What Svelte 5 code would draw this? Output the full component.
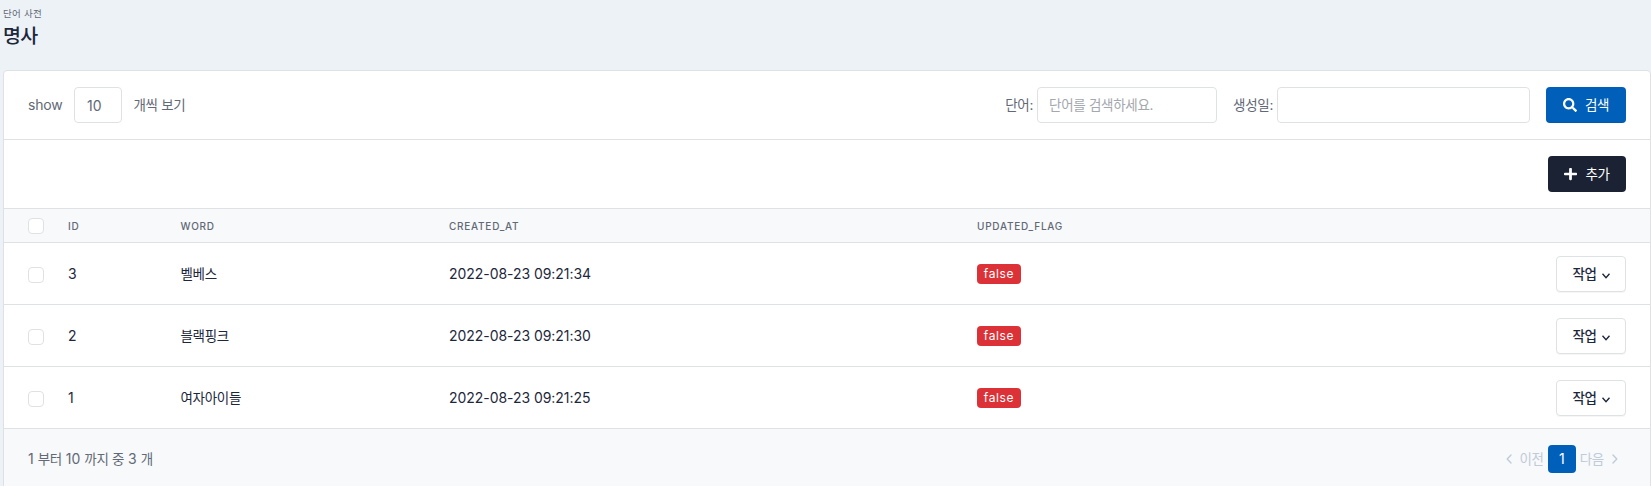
<script>
  const rows = [
    { id: 3, word: '벨베스', created: '2022-08-23 09:21:34', flag: 'false' },
    { id: 2, word: '블랙핑크', created: '2022-08-23 09:21:30', flag: 'false' },
    { id: 1, word: '여자아이들', created: '2022-08-23 09:21:25', flag: 'false' }
  ];
</script>

<div class="page">
  <header>
    <div class="pretitle">단어 사전</div>
    <h2>명사</h2>
  </header>

  <section class="card">
    <div class="bar">
      <div class="length">
        <span class="show">show</span>
        <input class="count" type="text" value="10" aria-label="count" />
        <span class="ko">개씩 보기</span>
      </div>
      <div class="search">
        <label class="word"><span class="ko">단어:</span><input class="ko" type="text" placeholder="단어를 검색하세요." /></label>
        <label class="date"><span class="ko">생성일:</span><input type="text" /></label>
        <button class="btn primary">
          <svg width="14" height="14" viewBox="0 0 512 512" fill="currentColor"><path d="M505 442.700L405.300 343c-4.500-4.500-10.600-7-17-7H372c27.600-35.300 44-79.700 44-128C416 93.100 322.900 0 208 0S0 93.100 0 208s93.100 208 208 208c48.300 0 92.700-16.400 128-44v16.300c0 6.400 2.500 12.500 7 17l99.700 99.700c9.400 9.400 24.600 9.400 33.900 0l28.300-28.300c9.400-9.400 9.400-24.600.1-34zM208 336c-70.700 0-128-57.200-128-128 0-70.700 57.200-128 128-128 70.700 0 128 57.200 128 128 0 70.700-57.200 128-128 128z" /></svg>
          <span class="ko">검색</span>
        </button>
      </div>
    </div>

    <div class="bar actions">
      <button class="btn dark">
        <svg width="13" height="14" viewBox="0 0 448 512" preserveAspectRatio="none" fill="currentColor"><path d="M416 208H272V64c0-17.700-14.300-32-32-32h-32c-17.700 0-32 14.300-32 32v144H32c-17.700 0-32 14.300-32 32v32c0 17.700 14.300 32 32 32h144v144c0 17.700 14.300 32 32 32h32c17.700 0 32-14.300 32-32V304h144c17.700 0 32-14.300 32-32v-32c0-17.700-14.300-32-32-32z" /></svg>
        <span class="ko">추가</span>
      </button>
    </div>

    <div class="row head">
      <input type="checkbox" aria-label="all" />
      <span>ID</span>
      <span>WORD</span>
      <span>CREATED_AT</span>
      <span>UPDATED_FLAG</span>
    </div>
    {#each rows as row (row.id)}
      <div class="row">
        <input type="checkbox" aria-label={row.word} />
        <span>{row.id}</span>
        <span class="ko">{row.word}</span>
        <span class="time">{row.created}</span>
        <span><span class="badge">{row.flag}</span></span>
        <button class="btn menu">
          <span class="ko">작업</span>
          <svg width="8" height="6" viewBox="0 0 8 6" fill="none" stroke="currentColor" stroke-width="1.400"><path d="M.5 .8 4 4.600 7.500 .8" /></svg>
        </button>
      </div>
    {/each}

    <footer>
      <p>1 <span class="ko">부터</span> 10 <span class="ko">까지 중</span> 3 <span class="ko">개</span></p>
      <nav>
        <span class="step">
          <svg width="6" height="10" viewBox="0 0 6 10" fill="none" stroke="currentColor" stroke-width="1.400" stroke-linecap="round" stroke-linejoin="round"><path d="M5 1 1.200 5 5 9" /></svg>
          <span class="ko">이전</span>
        </span>
        <span class="current">1</span>
        <span class="step">
          <span class="ko">다음</span>
          <svg width="6" height="10" viewBox="0 0 6 10" fill="none" stroke="currentColor" stroke-width="1.400" stroke-linecap="round" stroke-linejoin="round"><path d="M1 1 4.800 5 1 9" /></svg>
        </span>
      </nav>
    </footer>
  </section>
</div>

<style>
  :global(body) {
    background: #edf2f6;
  }
  .page {
    box-sizing: border-box;
    height: 486px;
    overflow: hidden;
    padding-left: 3px;
    font: 400 14px/20px Inter, 'Noto Sans CJK KR', sans-serif;
    color: #1d273b;
  }
  .page * {
    box-sizing: border-box;
  }
  header {
    height: 70px;
    padding-top: 6px;
  }
  .pretitle {
    font-size: 9.500px;
    line-height: 16px;
    letter-spacing: 0.25px;
    color: #626976;
  }
  h2 {
    margin: 0;
    font-size: 19.500px;
    font-weight: 500;
    line-height: 28px;
    letter-spacing: -0.8px;
  }
  .card {
    height: 440px;
    border: 1px solid #dfe2e4;
    border-radius: 4px;
    background: #fff;
    overflow: hidden;
  }
  .ko {
    font-size: 13.500px;
    letter-spacing: -0.3px;
  }
  .bar {
    display: flex;
    align-items: center;
    justify-content: space-between;
    height: 69px;
    padding: 0 24px;
    border-bottom: 1px solid #dfe2e4;
    color: #626976;
  }
  .actions {
    justify-content: flex-end;
  }
  .length,
  .search {
    display: flex;
    align-items: center;
  }
  .length {
    gap: 11.500px;
  }
  .show {
    width: 34.500px;
    letter-spacing: -0.15px;
  }
  .search {
    gap: 16px;
  }
  label {
    display: flex;
    align-items: center;
    gap: 4px;
  }
  input[type='text'] {
    height: 36px;
    padding: 0 12px;
    border: 1px solid #dfe2e4;
    border-radius: 4px;
    background: #fff;
    font-family: inherit;
    color: #626976;
  }
  .count {
    width: 48px;
    font-size: 14px;
  }
  .word input {
    width: 180px;
    padding-left: 11px;
  }
  .date input {
    width: 253px;
  }
  ::placeholder {
    color: #a3a7ae;
  }
  .btn {
    display: flex;
    align-items: center;
    justify-content: center;
    height: 36px;
    padding: 0;
    border: 0;
    border-radius: 4px;
    font: 500 14px/20px Inter, 'Noto Sans CJK KR', sans-serif;
    color: #fff;
  }
  .primary {
    width: 80px;
    gap: 8px;
    background: #0060b9;
    box-shadow: inset 0 -1px 0 rgba(24, 36, 51, 0.1);
  }
  .primary .ko,
  .dark .ko {
    font-weight: 400;
  }
  .dark {
    width: 78px;
    gap: 8px;
    background: #1a2234;
  }
  .menu {
    width: 70px;
    gap: 5px;
    border: 1px solid #dfe2e4;
    background: #fff;
    color: #1d273b;
    box-shadow: 0 1px 0 rgba(24, 36, 51, 0.04);
  }
  .menu svg {
    margin-top: 5px;
  }
  .row {
    display: grid;
    grid-template-columns: 40px 112.500px 268.500px 528px 1fr 70px;
    align-items: center;
    height: 62px;
    padding: 0 24px;
    border-bottom: 1px solid #dfe2e4;
  }
  .time {
    letter-spacing: -0.05px;
  }
  .head {
    height: 34px;
    background: #f8f9fb;
    font-size: 10px;
    font-weight: 500;
    letter-spacing: 0.75px;
    color: #626976;
  }
  input[type='checkbox'] {
    appearance: none;
    width: 16px;
    height: 16px;
    margin: 2px 0 0;
    border: 1px solid #dfe2e4;
    border-radius: 4px;
    background: #fff;
  }
  .head input[type='checkbox'] {
    margin: 0;
  }
  .badge {
    display: inline-block;
    width: 44px;
    height: 20px;
    border-radius: 4px;
    background: #dc3237;
    color: #fff;
    font-size: 12px;
    font-weight: 400;
    line-height: 19px;
    letter-spacing: 0.65px;
    text-align: center;
    vertical-align: middle;
  }
  footer {
    display: flex;
    align-items: center;
    justify-content: space-between;
    height: 59px;
    padding: 0 32px 0 24px;
    background: #f8f9fb;
    color: #626976;
  }
  .card {
    background: linear-gradient(#fff 400px, #f8f9fb 400px);
  }
  p {
    margin: 0;
  }
  nav,
  .step {
    display: flex;
    align-items: center;
  }
  nav {
    gap: 4px;
  }
  .step {
    gap: 8px;
    color: #c0cbd8;
  }
  .current {
    width: 28px;
    height: 28px;
    border-radius: 4px;
    background: #0060b9;
    color: #fff;
    line-height: 28px;
    text-align: center;
  }
</style>
